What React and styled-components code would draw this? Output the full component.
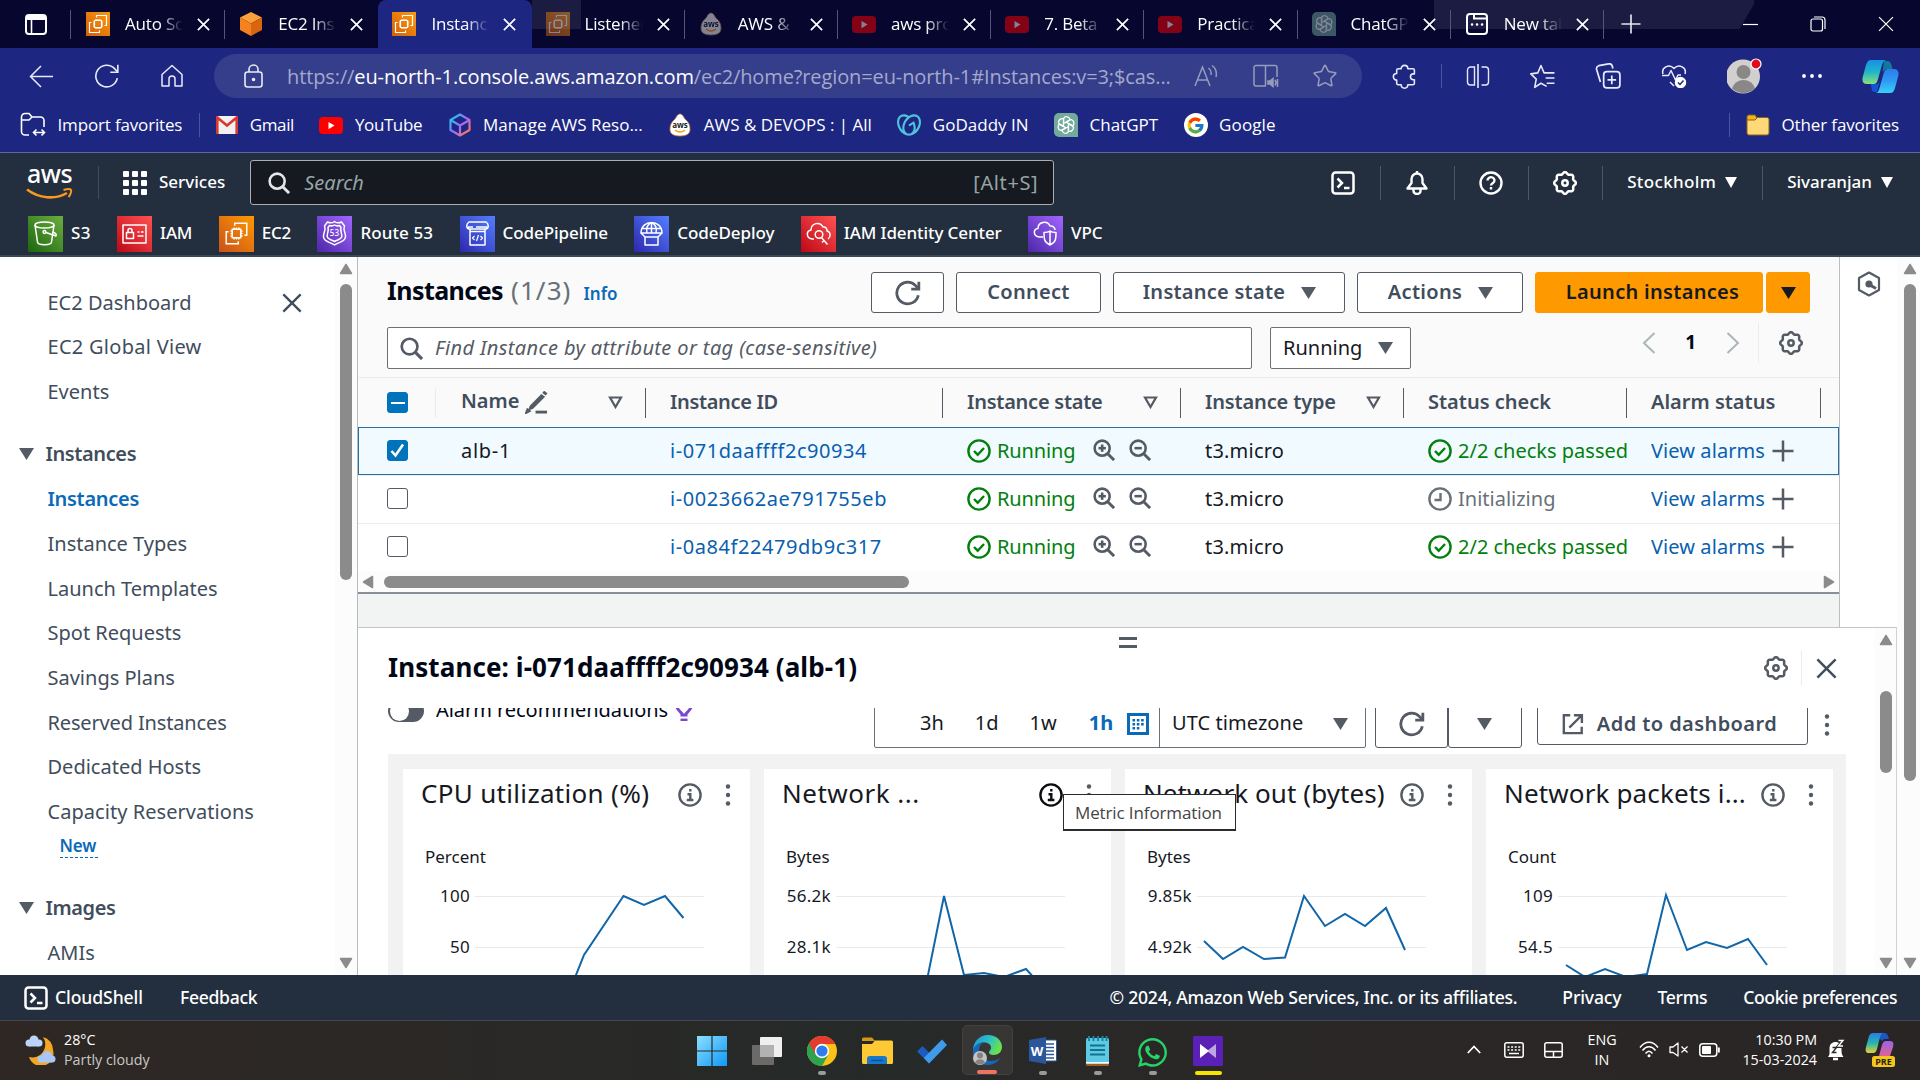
import React from "react";
import styled, { createGlobalStyle, css } from "styled-components";
import { FcGoogle } from "react-icons/fc";
import { FaWhatsapp } from "react-icons/fa";
import { SiGodaddy } from "react-icons/si";
import { Star } from "lucide-react";

const AWS_FONT = `"Noto Sans", "Open Sans", sans-serif`;
const OS_FONT = `"Open Sans", "Noto Sans", sans-serif`;

const GlobalStyle = createGlobalStyle`
  * { box-sizing: border-box; }
  body { margin: 0; background: #fff; overflow: hidden; }
  svg { display: block; flex: none; }
`;

const Screen = styled.div`
  width: 1920px;
  height: 1080px;
  display: flex;
  flex-direction: column;
  overflow: hidden;
  font-family: ${AWS_FONT};
  font-size: 20px;
  line-height: 1.3;
  color: #000716;
  white-space: nowrap;
`;

const Label = styled.span`
  font-size: ${(p) => p.$size || 20}px;
  font-weight: ${(p) => p.$weight || 400};
  letter-spacing: ${(p) => p.$ls || 0}px;
  color: ${(p) => p.$color || "inherit"};
  margin-left: ${(p) => p.$ml || 0}px;
`;

const Spacer = styled.div`
  flex: ${(p) => (p.$w ? `none` : 1)};
  width: ${(p) => p.$w || 0}px;
`;

/* ------------------------------- browser ------------------------------- */

const TabStrip = styled.div`
  height: 48px;
  flex: none;
  display: flex;
  align-items: stretch;
  background: #06062e;
  color: #fff;
  font-family: ${OS_FONT};
  background-image: linear-gradient(#1c1b41, #1c1b41),
    linear-gradient(120deg, #1c1b41 calc(100% - 13px), transparent calc(100% - 12px));
  background-size: 49px 29px, 320px 29px;
  background-position: 532px 0, 1434px 0;
  background-repeat: no-repeat;
`;

const TabActions = styled.div`
  width: 72px;
  display: flex;
  align-items: center;
  padding-left: 25px;
  gap: 23px;
`;

const VRule = styled.div`
  flex: none;
  width: 1px;
  height: ${(p) => p.$h}px;
  background: ${(p) => p.$color};
`;

const Tab = styled.div`
  width: 153.2px;
  display: flex;
  align-items: center;
  padding-left: 14px;
  border-radius: 8px 8px 0 0;
  ${(p) => p.$active && css`background: #1d2681;`}
  > svg { opacity: ${(p) => (p.$dim ? 0.5 : 1)}; }
  > svg:last-of-type { opacity: 1; }
`;

const TabTitle = styled.div`
  width: 58px;
  margin: 0 14px 0 15px;
  overflow: hidden;
  font-size: 17px;
  letter-spacing: -0.2px;
  -webkit-mask-image: linear-gradient(90deg, #000 60%, transparent);
  mask-image: linear-gradient(90deg, #000 60%, transparent);
`;

const WindowButtons = styled.div`
  margin-left: auto;
  display: flex;
  align-items: center;
  gap: 52px;
  padding-right: 26px;
`;

const Toolbar = styled.div`
  height: 56px;
  flex: none;
  display: flex;
  align-items: center;
  background: #1d2681;
  color: #e8eaf8;
  padding: 0 21px 0 29px;
  font-family: ${OS_FONT};
`;

const NavButtons = styled.div`
  display: flex;
  align-items: center;
  flex: none;
  width: 185px;
  gap: 40px;
`;

const AddressBar = styled.div`
  flex: none;
  width: 1148px;
  height: 44px;
  border-radius: 22px;
  background: #343e8b;
  display: flex;
  align-items: center;
  padding: 0 24px 0 30px;
`;

const Url = styled.div`
  margin-left: 24px;
  padding-top: 1px;
  width: 908px;
  font-size: 20px;
  letter-spacing: -0.11px;
  color: #a4a9cc;
  b { font-weight: 400; color: #fff; }
`;

const ToolbarActions = styled.div`
  flex: 1;
  display: flex;
  align-items: center;
  gap: 40px;
  padding-left: 30px;
`;

const ToolbarGroup = styled.div`
  display: flex;
  align-items: center;
  gap: 24px;
`;

const Bookmarks = styled.div`
  height: 49px;
  flex: none;
  display: flex;
  align-items: center;
  gap: 25.5px;
  background: #1d2681;
  border-bottom: 1px solid #5b67a8;
  color: #fff;
  padding: 0 21px 6px 20px;
  font-family: ${OS_FONT};
  font-size: 17px;
`;

const Bookmark = styled.div`
  display: flex;
  align-items: center;
  gap: 11.5px;
  letter-spacing: ${(p) => p.$ls || 0}px;
`;

const BookmarkRule = styled(VRule)`
  margin: 0 -9px;
`;

/* ------------------------------ aws header ----------------------------- */

const ConsoleHeader = styled.div`
  height: 104px;
  flex: none;
  background: #232f3e;
  border-bottom: 2px solid #3c4754;
  color: #fff;
`;

const HeaderRow = styled.div`
  height: 59px;
  display: flex;
  align-items: center;
  padding: 0 27px 0 26px;
`;

const AwsLogo = styled.div`
  width: 47px;
  height: 40px;
  display: flex;
  flex-direction: column;
  align-items: center;
  font-size: 25px;
  line-height: 21px;
  letter-spacing: -0.5px;
  font-weight: 500;
  svg { margin-top: 4px; }
`;

const ConsoleSearch = styled.div`
  width: 804px;
  height: 45px;
  margin-left: 25px;
  display: flex;
  align-items: center;
  gap: 14px;
  padding: 0 15px 0 17px;
  background: #16191f;
  border: 1px solid #a7b0b3;
  border-radius: 3px;
  color: #95a5a6;
  em { flex: 1; }
`;

const HeaderTools = styled.div`
  margin-left: auto;
  display: flex;
  align-items: center;
  gap: 24.5px;
`;

const MenuLabel = styled.div`
  display: flex;
  align-items: center;
  gap: 9px;
  font-size: 17px;
  font-weight: 500;
  letter-spacing: ${(p) => p.$ls || 0}px;
`;

const ServicesRow = styled.div`
  height: 43px;
  display: flex;
  align-items: center;
  gap: 26.4px;
  padding-left: 28px;
`;

const Service = styled.div`
  display: flex;
  align-items: center;
  gap: 8px;
  font-size: 17px;
  font-weight: 500;
  letter-spacing: ${(p) => p.$ls ?? -0.08}px;
`;

const ServiceTile = styled.div`
  width: 35px;
  height: 36px;
  display: grid;
  place-items: center;
  background: linear-gradient(45deg, ${(p) => p.$from}, ${(p) => p.$to});
`;

/* -------------------------------- body --------------------------------- */

const Body = styled.div`
  height: 718px;
  flex: none;
  display: flex;
  background: #fff;
`;

const Sidebar = styled.nav`
  width: 335px;
  padding-top: 23.5px;
  color: #414d5c;
  overflow: hidden;
`;

const NavItem = styled.div`
  height: 44.65px;
  display: flex;
  align-items: center;
  justify-content: space-between;
  padding: 0 33px 0 47.500px;
  ${(p) => p.$active && css`color: #0a6ab8; font-weight: 600; letter-spacing: -0.3px;`}
`;

const NavGroup = styled.div`
  display: flex;
  align-items: center;
  gap: 12px;
  height: ${(p) => p.$h}px;
  padding: ${(p) => p.$pt}px 0 0 18.500px;
  font-weight: 600;
  letter-spacing: -0.4px;
  color: #414d5c;
`;

const NewBadge = styled.div`
  width: 38px;
  height: 25px;
  margin: -1px 0 0 59.500px;
  line-height: 25px;
  border-bottom: 1.500px dashed #0a6ab8;
  color: #0a6ab8;
  font-size: 17px;
  font-weight: 600;
  letter-spacing: -0.2px;
`;

const Gutter = styled.div`
  width: ${(p) => p.$w}px;
  flex: none;
  display: flex;
  flex-direction: column;
  align-items: center;
  padding: ${(p) => p.$pt}px 0 5px ${(p) => p.$pl || 0}px;
  background: #fcfcfc;
`;

const ThumbV = styled.div`
  width: 12px;
  height: ${(p) => p.$h}px;
  margin: ${(p) => p.$mt}px 0 auto;
  border-radius: 6px;
  background: #8b8b8b;
`;

const Center = styled.div`
  width: 1540px;
  flex: none;
  display: flex;
  flex-direction: column;
  border-left: 1px solid #b6bbc0;
`;

const Upper = styled.div`
  height: 370px;
  flex: none;
  display: flex;
`;

const TablePanel = styled.section`
  width: 1482px;
  display: flex;
  flex-direction: column;
  background: #f2f3f3;
  border-right: 1px solid #b9bec4;
`;

const Rail = styled.div`
  flex: 1;
  padding: 14px 0 0 17px;
  background: #fff;
`;

const PanelHeader = styled.div`
  height: 121px;
  flex: none;
  background: #fafafa;
  border-bottom: 1px solid #e9ebed;
  padding: 15px 29px 0 29px;
`;

const HeaderLine = styled.div`
  display: flex;
  align-items: center;
  height: 41px;
  gap: 12px;
`;

const Heading = styled.h2`
  margin: 0 0 ${(p) => p.$mb ?? 4}px;
  font-size: ${(p) => p.$size || 25}px;
  font-weight: 700;
  letter-spacing: ${(p) => p.$ls || 0}px;
  line-height: 1.2;
`;

const InfoLink = styled.a`
  margin: 4px 0 0 0;
  font-size: 17px;
  font-weight: 600;
  color: #0a6ab8;
`;

const Button = styled.button`
  width: ${(p) => p.$w}px;
  height: ${(p) => p.$h || 41}px;
  flex: none;
  margin: ${(p) => p.$mt || 0}px 0 0;
  padding: 0 ${(p) => p.$pr || 0}px 2px ${(p) => p.$pl || 0}px;
  display: flex;
  align-items: center;
  justify-content: center;
  gap: ${(p) => p.$gap || 16}px;
  font: 600 20px ${AWS_FONT};
  letter-spacing: ${(p) => p.$ls || 0.3}px;
  color: #414d5c;
  background: #fff;
  border: 1px solid #545b64;
  border-radius: 3px;
  svg { margin-top: 2px; }
  ${(p) => p.$primary && css`background: #ff9900; border-color: #ff9900; color: #16191f;`}
`;

const SplitButton = styled.div`
  display: flex;
  gap: 3px;
`;

const FilterLine = styled.div`
  display: flex;
  align-items: flex-start;
  margin-top: 14px;
`;

const FilterInput = styled.div`
  width: 865px;
  height: 42px;
  display: flex;
  align-items: center;
  gap: 12px;
  padding-left: 12px;
  background: #fff;
  border: 1px solid #687078;
  border-radius: 2px;
  color: #545b64;
  letter-spacing: 0.38px;
`;

const Select = styled.div`
  width: 141px;
  height: 42px;
  margin-left: 18px;
  display: flex;
  align-items: center;
  justify-content: space-between;
  padding: 0 17px 0 12px;
  background: #fff;
  border: 1px solid #687078;
  border-radius: 2px;
  color: #16191f;
`;

const Pager = styled.div`
  margin-left: auto;
  margin-top: -5px;
  height: 42px;
  display: flex;
  align-items: center;
  padding-right: 7px;
  span { margin-top: -2px; }
`;

const columns = "78px 210px 297px 238px 223px 223px 194px 19px";

const TableHead = styled.div`
  height: 49px;
  flex: none;
  display: grid;
  grid-template-columns: ${columns};
  align-items: center;
  background: #fafafa;
  color: #414d5c;
  font-weight: 600;
`;

const HeadCell = styled.div`
  display: flex;
  align-items: center;
  padding-left: ${(p) => (p.$first ? 29 : p.$name ? 25 : 24)}px;
  letter-spacing: ${(p) => p.$ls || 0}px;
  ${VRule} { margin-left: auto; }
`;

const HeadText = styled.span`
  margin-top: ${(p) => p.$up || -2}px;
`;

const SortMark = styled.div`
  margin-left: auto;
  margin-right: 22px;
  & + ${VRule} { margin-left: 0; }
`;

const TableRow = styled.div`
  height: 48px;
  flex: none;
  display: grid;
  grid-template-columns: ${columns};
  align-items: start;
  background: #fff;
  border-top: 1px solid #eaeded;
  ${(p) => p.$selected && css`
    background: #f1faff;
    outline: 1px solid #2a6f9f;
    outline-offset: -1px;
    border-top-color: #2a6f9f;
  `}
`;

const Cell = styled.div`
  display: flex;
  align-items: center;
  overflow: hidden;
  height: 45px;
  gap: ${(p) => p.$gap ?? 6}px;
  margin-left: ${(p) => (p.$first ? 29 : p.$name ? 25 : 24)}px;
  color: ${(p) => p.$color || "#16191f"};
  letter-spacing: ${(p) => p.$ls || 0}px;
`;

const ZoomPair = styled.div`
  display: flex;
  gap: 14px;
  margin: -2px 0 0 12px;
`;

const CheckSquare = styled.div`
  width: 21px;
  height: 21px;
  display: grid;
  place-items: center;
  border-radius: 3px;
  border: 1.5px solid ${(p) => (p.$on ? "#0073bb" : "#545b64")};
  background: ${(p) => (p.$on ? "#0073bb" : "#fff")};
`;

const HScroll = styled.div`
  height: 23px;
  flex: none;
  display: flex;
  align-items: center;
  padding: 0 3px 0 3px;
  background: #fcfcfc;
  border-bottom: 2px solid #879096;
`;

const ThumbH = styled.div`
  width: 525px;
  height: 12px;
  margin: 0 auto 0 9px;
  border-radius: 6px;
  background: #8b8b8b;
`;

/* ----------------------------- split panel ----------------------------- */

const SplitPanel = styled.section`
  flex: 1;
  display: flex;
  background: #fff;
  border-top: 1px solid #c3c6c8;
  border-right: 1px solid #d0d3d6;
  overflow: hidden;
`;

const SplitMain = styled.div`
  flex: 1;
  min-width: 0;
  display: flex;
  flex-direction: column;
`;

const DragHandle = styled.div`
  width: 18px;
  height: 11px;
  margin: 9px 0 0 761px;
  border: solid #545b64;
  border-width: 3px 0;
`;

const SplitHeader = styled.div`
  height: 60px;
  display: flex;
  align-items: center;
  padding: 0 37px 20px 30px;
`;

const SplitBody = styled.div`
  flex: 1;
  overflow: hidden;
  padding-left: 30px;
`;

const MetricsToolbar = styled.div`
  height: 54px;
  margin-top: -8px;
  display: flex;
  align-items: flex-start;
`;

const ToggleLine = styled.div`
  width: 486px;
  height: 20px;
  display: flex;
  align-items: center;
`;

const Toggle = styled.div`
  width: 36px;
  height: 22px;
  margin-top: 2px;
  display: flex;
  align-items: center;
  padding-left: 2px;
  border-radius: 11px;
  background: #545b64;
  &::before {
    content: "";
    width: 19px;
    height: 19px;
    border-radius: 50%;
    background: #fff;
  }
`;

const RangeBox = styled.div`
  width: 492px;
  height: 48px;
  display: flex;
  align-items: center;
  border: 1px solid #687078;
  border-radius: 2px;
  color: #16191f;
`;

const RangePart = styled.div`
  width: 285px;
  height: 46px;
  display: flex;
  align-items: center;
  padding: 0 0 2px 45px;
  border-right: 1px solid #687078;
  svg { margin: 2px 0 0 14px; }
`;

const ZonePart = styled.div`
  flex: 1;
  display: flex;
  align-items: center;
  justify-content: space-between;
  padding: 0 17px 2px 12px;
  letter-spacing: 0.07px;
  svg { margin-top: 2px; }
`;

const ButtonPair = styled.div`
  display: flex;
  margin-left: 9px;
`;

const ToolbarMenu = styled.div`
  margin: 13px 0 0 16px;
`;

const Charts = styled.div`
  width: 1458px;
  height: 221px;
  display: flex;
  gap: 14px;
  padding: 15px 13px 0 15px;
  background: #f2f2f2;
`;

const ChartCard = styled.div`
  flex: 1;
  background: #fff;
  overflow: hidden;
`;

const ChartHead = styled.div`
  height: 50px;
  display: flex;
  align-items: center;
  padding: 1px 19px 0 18px;
`;

const ChartTitle = styled.div`
  flex: 1;
  margin-top: -1px;
  font-size: 26px;
  letter-spacing: ${(p) => p.$ls}px;
  color: #16191f;
`;

const ChartUnit = styled.div`
  margin: 27px 0 0 22px;
  height: 23px;
  font-size: 17px;
  color: #16191f;
`;

const ChartBody = styled.div`
  display: flex;
  gap: 5px;
  > svg { margin-top: 11px; }
`;

const Ticks = styled.div`
  width: 67px;
  display: flex;
  flex-direction: column;
  align-items: flex-end;
  font-size: 17px;
  letter-spacing: 0.3px;
  color: #16191f;
  padding-top: 16px;
  gap: 29px;
  line-height: 22px;
`;

const Tooltip = styled.div`
  position: absolute;
  left: 1063px;
  top: 794px;
  width: 173px;
  height: 37px;
  display: flex;
  align-items: center;
  padding-left: 11px;
  background: #fff;
  border: 1px solid #2b2b2b;
  border-bottom-width: 2px;
  font: 17px ${OS_FONT};
  letter-spacing: -0.12px;
  color: #444;
`;

/* --------------------------- footer & taskbar -------------------------- */

const Footer = styled.footer`
  height: 45px;
  flex: none;
  display: flex;
  align-items: center;
  background: #232f3e;
  color: #fff;
  padding: 0 23px 0 24px;
  font-size: 17.6px;
  font-weight: 500;
`;

const Taskbar = styled.div`
  height: 60px;
  flex: none;
  display: flex;
  align-items: center;
  background: linear-gradient(90deg, #2e2724, #2a2826 25%, #252a28 45%, #2a2827 60%, #292524);
  border-top: 1px solid #43474b;
  color: #fff;
  font-family: ${OS_FONT};
  font-size: 14.3px;
  line-height: 20px;
  padding-bottom: 2px;
`;

const Weather = styled.div`
  width: 684px;
  display: flex;
  align-items: center;
  gap: 8px;
  padding-left: 25px;
  small { font-size: inherit; color: #c9c7c6; }
`;

const TaskButton = styled.div`
  width: 55.2px;
  height: 60px;
  display: flex;
  flex-direction: column;
  align-items: center;
  justify-content: flex-end;
  padding-bottom: 5px;
  gap: 5px;
`;

const TaskIcon = styled.div`
  width: 50px;
  height: 30px;
  display: grid;
  place-items: center;
`;

const ActiveTaskButton = styled(TaskButton)`
  width: 51px;
  height: 50px;
  margin: 0 2px;
  padding-bottom: 0;
  border-radius: 5px;
  background: #383635;
  border: 1px solid #444140;
`;

const Pill = styled.div`
  width: ${(p) => p.$w || 0}px;
  height: 4px;
  border-radius: 2px;
  background: ${(p) => p.$color || "#9b9a99"};
`;

const Tray = styled.div`
  margin-left: auto;
  display: flex;
  align-items: center;
  padding-right: 25px;
`;

const TrayText = styled.div`
  width: ${(p) => p.$w}px;
  margin: 0 ${(p) => p.$mr}px 0 ${(p) => p.$ml}px;
  text-align: ${(p) => p.$align};
`;

/* -------------------------------- icons -------------------------------- */

const Svg = ({ w = 24, h, box = "0 0 24 24", sw = 2, color = "currentColor", children, ...rest }) => (
  <svg width={w} height={h || w} viewBox={box} fill="none" stroke={color} strokeWidth={sw} {...rest}>
    {children}
  </svg>
);

const Caret = ({ w = 15, h = 11, color = "#545b64" }) => (
  <svg width={w} height={h} viewBox="0 0 15 11" preserveAspectRatio="none"><path d="M0 0H15L7.5 11Z" fill={color} /></svg>
);

const ScrollArrow = ({ dir = "up" }) => {
  const turn = { up: 0, right: 90, down: 180, left: 270 }[dir];
  return (
    <svg width="14" height="14" viewBox="0 0 14 14">
      <path d="M7 2.500 12.500 11.500H1.500Z" fill="#8b8b8b" stroke="#8b8b8b" strokeWidth="1.500" strokeLinejoin="round" transform={`rotate(${turn} 7 7)`} />
    </svg>
  );
};

const Cross = ({ w = 12, sw = 1.6, color = "#fff" }) => (
  <Svg w={w} box="0 0 12 12" sw={sw} color={color}><path d="M.8.8 11.2 11.2M11.2.8.8 11.2" /></Svg>
);

const Ec2 = () => (
  <g fill="none" stroke="#fff" strokeWidth="1.2">
    <path d="M8.500 8.500h7v7h-7zM10 8.500V7M12 8.500V7M14 8.500V7M10 17v-1.500M12 17v-1.500M14 17v-1.500M7 10h1.500M7 12h1.500M7 14h1.500M15.500 10H17M15.500 12H17M15.500 14H17" />
    <path d="M10.500 5.500V3.500H20.500V13.500H18.500M5.500 10.500H3.500V20.500H13.500V18.500" />
  </g>
);

const Ec2Fav = () => (
  <svg width="24" height="24" viewBox="0 0 24 24">
    <defs><linearGradient id="ec2f" x1="0" y1="1" x2="1" y2="0"><stop stopColor="#d45f07" /><stop offset="1" stopColor="#fb9a11" /></linearGradient></defs>
    <rect width="24" height="24" fill="url(#ec2f)" /><Ec2 />
  </svg>
);

const CubeFav = () => (
  <svg width="24" height="24" viewBox="0 0 24 24">
    <path d="M12 0 23 5.500 12 11.500 1 5.500Z" fill="#fba13b" /><path d="M1 5.500 12 11.500V24L1 18Z" fill="#f58220" /><path d="M23 5.500 12 11.500V24L23 18Z" fill="#d9660f" />
  </svg>
);

const AwsFav = () => (
  <svg width="24" height="24" viewBox="0 0 24 24">
    <path d="M12 1c3 0 3.500 4 6 6 3 2.500 4 6 4 9s-1 7-10 7S2 19 2 16s1-6.500 4-9c2.500-2 3-6 6-6Z" fill="#fff" stroke="#c9854a" strokeWidth=".8" />
    <text x="12" y="14.500" textAnchor="middle" fontSize="8" fontWeight="700" fontFamily={OS_FONT} fill="#222">aws</text>
    <path d="M7 17c3 2.500 7 2.500 10 0" fill="none" stroke="#f90" strokeWidth="1.500" />
  </svg>
);

const YouTube = ({ w = 24 }) => (
  <svg width={w} height={(w * 17) / 24} viewBox="0 0 24 17"><rect width="24" height="17" rx="4" fill="#f00" /><path d="M9.500 5v7.200l6-3.600Z" fill="#fff" /></svg>
);

const ChatGpt = () => (
  <svg width="24" height="24" viewBox="0 0 24 24">
    <path d="M5 0H19A5 5 0 0 1 24 5V24H5A5 5 0 0 1 0 19V5A5 5 0 0 1 5 0Z" fill="#74aa9c" />
    <g fill="none" stroke="#fff" strokeWidth="1.300">
      {[0, 60, 120, 180, 240, 300].map((a) => (
        <path key={a} transform={`rotate(${a} 12 12)`} d="M12 9.200 16 6.900A3.600 3.600 0 0 0 10.300 4.400 3.400 3.400 0 0 0 9.500 6.800V13.400" />
      ))}
    </g>
  </svg>
);

const NewTabFav = () => (
  <Svg sw={2}><rect x="2" y="2" width="20" height="20" rx="3" /><path d="M9 2v4.500h13" /><path d="M7 12.500h.1M12 12.500h.1M17 12.500h.1" strokeLinecap="round" strokeWidth="2.500" /></Svg>
);

const TabMenu = () => (
  <Svg w={22} h={21} box="0 0 22 21" color="#fff"><rect x="1" y="1" width="20" height="19" rx="3" /><path d="M1 4h20" strokeWidth="4" /><path d="M6.500 5v15" strokeWidth="1.600" /></Svg>
);

const Gmail = () => (
  <svg width="22" height="18" viewBox="0 0 22 18"><rect width="22" height="18" rx="2" fill="#f1f1f1" /><path d="M1.300 18V1.500L11 9.500 20.700 1.500V18" fill="none" stroke="#d93a30" strokeWidth="2.600" /></svg>
);

const ManageAws = () => (
  <svg width="24" height="24" viewBox="0 0 24 24">
    <defs><linearGradient id="mng" x1="0" y1="0" x2="1" y2="1"><stop offset=".1" stopColor="#22c3ee" /><stop offset=".5" stopColor="#9a6bff" /><stop offset=".95" stopColor="#ff7b54" /></linearGradient></defs>
    <path d="M12 1.500 21.500 7V17L12 22.500 2.500 17V7ZM2.500 7 12 12.500 21.500 7M12 12.500V22.500" fill="none" stroke="url(#mng)" strokeWidth="2.200" strokeLinejoin="round" />
  </svg>
);

const GoogleFav = styled.div`
  width: 24px;
  height: 24px;
  display: grid;
  place-items: center;
  border-radius: 50%;
  background: #fff;
`;

const ImportFolder = () => (
  <Svg w={26} box="0 0 26 26" sw={1.600}><path d="M9 23H5a3.500 3.500 0 0 1-3.500-3.500V5A3.500 3.500 0 0 1 5 1.500h4L12 5h8.500A3.500 3.500 0 0 1 24 8.500V15M1.500 8H9l3-3" /><path d="M13.500 20.500h11M16.500 17.500l-3 3 3 3M21.500 17.500l3 3-3 3" /></Svg>
);

const Folder = () => (
  <svg width="24" height="22" viewBox="0 0 24 22"><path d="M1 3a2 2 0 0 1 2-2h6l2 3-2 3H1Z" fill="#f2b41f" stroke="#8a6414" /><path d="M1 6h8l2.500-2.500H21a2 2 0 0 1 2 2V19a2 2 0 0 1-2 2H3a2 2 0 0 1-2-2Z" fill="#ffd978" stroke="#8a6414" /></svg>
);

const Copilot = ({ w = 37, h = 33 }) => (
  <svg width={w} height={h} viewBox="0 0 37 33">
    <defs>
      <linearGradient id="cpa" x1="0" y1="0" x2="0" y2="1"><stop stopColor="#1890e6" /><stop offset=".5" stopColor="#1fb6c9" /><stop offset="1" stopColor="#8be07a" /></linearGradient>
      <linearGradient id="cpb" x1="0" y1="0" x2="0" y2="1"><stop stopColor="#2b7de9" /><stop offset=".5" stopColor="#2f9bf5" /><stop offset="1" stopColor="#38d0f5" /></linearGradient>
    </defs>
    <path d="M22 1h3c3 0 4 2 4.500 4l1 4h-7l-3 3Z" fill="#117a9b" />
    <path d="M15 32h-2c-3 0-3-2-3.500-4l-.800-4h7l2-3Z" fill="#1553d6" />
    <path d="M9 0H25c-3 0-4 2-5 5l-4 14c-1 4-2 5-5 5H5c-4 0-5.500-3-4-8L4 5C5 2 6 0 9 0Z" fill="url(#cpa)" />
    <path d="M28 33H13c3 0 3.500-2 4.500-5l4-14c1-4 2-5 5-5H32c4 0 5.500 3 4 8l-3 11c-1 3-2 5-5 5Z" fill="url(#cpb)" />
  </svg>
);

const CopilotPre = () => (
  <svg width="30" height="36" viewBox="0 0 30 36">
    <defs>
      <linearGradient id="cqa" x1="0" y1="0" x2="0" y2="1"><stop stopColor="#2a7be8" /><stop offset=".5" stopColor="#23b5b0" /><stop offset="1" stopColor="#e6d23c" /></linearGradient>
      <linearGradient id="cqb" x1="0" y1="0" x2="0" y2="1"><stop stopColor="#9a63e8" /><stop offset="1" stopColor="#f2607e" /></linearGradient>
    </defs>
    <path d="M9 1H20c2 0 3 2 4 6h-5l-2 2Z" fill="#1b56c4" />
    <path d="M8 1h11c-2 0-3 1-4 4l-3 12c-1 3-2 4-4 4H4c-3 0-4-2-3-6L4 4C5 2 6 1 8 1Z" fill="url(#cqa)" />
    <path d="M20 28H10c2 0 3-1 4-4l3-11c1-3 2-4 4-4h4c3 0 4 2 3 6l-3 9c-1 3-3 4-5 4Z" fill="url(#cqb)" />
    <rect x="7" y="24" width="23" height="11" rx="2.500" fill="#f5c518" />
    <text x="18.500" y="33" textAnchor="middle" fontSize="9" fontWeight="700" fontFamily={OS_FONT} fill="#222">PRE</text>
  </svg>
);

const gearPath = Array.from({ length: 97 }, (_, i) => {
  const t = (i / 96) * Math.PI * 2;
  const r = 9.9 + 0.95 * Math.cos(8 * t);
  return `${i ? "L" : "M"}${(12 + r * Math.cos(t)).toFixed(2)} ${(12 + r * Math.sin(t)).toFixed(2)}`;
}).join("") + "Z";

const Gear = ({ color = "#545b64", sw = 2.5, w = 24 }) => (
  <Svg w={w} color={color} sw={sw}><path d={gearPath} /><circle cx="12" cy="12" r="2.700" /></Svg>
);

const Refresh = ({ w = 26, sw = 2.6, color = "#545b64" }) => (
  <Svg w={w} color={color} sw={sw}><path d="M21.500 14A10 10 0 1 1 19 5.200L21.500 8" /><path d="M22 1.500V8.500H15" /></Svg>
);

const Magnifier = ({ w = 22, color = "#545b64", sign }) => (
  <Svg w={w} color={color} sw={2.800}><circle cx="10" cy="10" r="8.200" /><path d="M15.800 15.800 23 23" strokeWidth="3.200" />{sign && <path d="M6 10h8" />}{sign === "+" && <path d="M10 6v8" />}</Svg>
);

const CloudShellIcon = ({ w = 24 }) => (
  <Svg w={w} color="#fff" sw={2.500}><rect x="1.500" y="1.500" width="21" height="21" rx="3" /><path d="M6.500 7.500 11 12 6.500 16.500M13 17h5.500" /></Svg>
);

const StatusOk = () => (
  <Svg w={24} color="#037f0c" sw={2.400}><circle cx="12" cy="12" r="10.600" /><path d="M7 12l3.700 3.700L17 9" /></Svg>
);

const StatusPending = () => (
  <Svg w={24} color="#687078" sw={2.400}><circle cx="12" cy="12" r="10.600" /><path d="M12.500 6v7H6.500" /></Svg>
);

const PlusIcon = ({ color = "#545b64", w = 22, sw = 2.500 }) => (
  <Svg w={w} box="0 0 22 22" color={color} sw={sw}><path d="M11 .5v21M.5 11h21" /></Svg>
);

const InfoIcon = ({ color = "#545b64" }) => (
  <Svg w={24} color={color} sw={2.400}><circle cx="12" cy="12" r="10.600" /><path d="M12.300 6v2.600M9.500 11.200h2.800v5.300M8.800 17h6.600" /></Svg>
);

const Dots = () => (
  <svg width="6" height="24" viewBox="0 0 6 24" fill="#545b64"><circle cx="3" cy="3.500" r="2.200" /><circle cx="3" cy="12" r="2.200" /><circle cx="3" cy="20.500" r="2.200" /></svg>
);

const SortTriangle = () => (
  <Svg w={15} h={13} box="0 0 15 13" color="#545b64" sw={2.200}><path d="M2 1.500H13L7.500 11Z" /></Svg>
);

const AWS_ICON = { fill: "none", stroke: "#fff", strokeWidth: 1.5, strokeLinejoin: "round" };
const ServiceGlyph = ({ children }) => <svg width="27" height="27" viewBox="0 0 27 27" {...AWS_ICON}>{children}</svg>;

const services = [
  { name: "S3", from: "#1b660f", to: "#6cae3e", ls: 0.3, icon: <ServiceGlyph><ellipse cx="12.500" cy="5" rx="9.500" ry="3" /><path d="M3 5l2.500 17c0 3.500 14 3.500 14 0L22 5" /><circle cx="12.500" cy="12" r="1.400" /><path d="M14 12.500 24 16c1-2-1-3-3-4" /></ServiceGlyph> },
  { name: "IAM", from: "#bd0816", to: "#ff5252", ls: -0.2, icon: <ServiceGlyph><rect x="2" y="5" width="23" height="18" /><rect x="5.500" y="12.500" width="7" height="6" /><path d="M7 12.500v-2a2 2 0 0 1 4 0v2M16.500 12h2M20 12h2.500M16.500 16h6" /></ServiceGlyph> },
  { name: "EC2", from: "#c8511b", to: "#ff9900", ls: -0.2, icon: <svg width="29" height="29" viewBox="0 0 24 24"><Ec2 /></svg> },
  { name: "Route 53", from: "#4d27a8", to: "#a166ff", ls: 0.1, icon: <ServiceGlyph><path d="M13.500 1.500c2 1.500 5 1.500 7 .500l3 4c-2 4 1.500 7 1 11-.500 5-7 5-11 8-4-3-10.500-3-11-8-.500-4 3-7 1-11l3-4c2 1 5 1 7-.500Z" /><path d="M13.500 5c1.500 1 3.500 1 5 .500l1.500 2c-1 3 1 6 .800 9-.500 3-4 3-7.300 5-3.300-2-6.800-2-7.300-5-.200-3 1.800-6 .800-9l1.500-2c1.500.500 3.500.500 5-.500Z" /><text x="13.500" y="16" textAnchor="middle" fontSize="8" fontFamily={AWS_FONT} fill="#fff" stroke="none">53</text></ServiceGlyph> },
  { name: "CodePipeline", from: "#2e27ad", to: "#527fff", icon: <ServiceGlyph><path d="M5 2h17c3 2 3 6 0 7H5C2 8 2 4 5 2ZM4 7h5M12 7h11M6 9v2.500h15V9M6 11.500V25h15V11.500" /><path d="M10.500 16 8.500 18l2 2M16.500 16l2 2-2 2M14.500 15l-2 6" strokeWidth="1.200" /></ServiceGlyph> },
  { name: "CodeDeploy", from: "#2e27ad", to: "#527fff", icon: <ServiceGlyph><path d="M3 13C3 -1 24 -1 24 13ZM13.500 2.500v10.500M9 13c-1-5 1-9 4.500-10.500C17 4 19 8 18 13M4 8.500h19" /><path d="M3 13l4 4h13l4-4M7 17v8h13v-8Z" /></ServiceGlyph> },
  { name: "IAM Identity Center", from: "#bd0816", to: "#ff5252", ls: -0.1, icon: <ServiceGlyph><path d="M9 19H7c-6-1-6-8-1-9 0-7 9-9 12-3 3-.500 4 2 4 4 4 1 4 6 1 8" /><circle cx="14" cy="14.500" r="3.800" /><path d="M16.500 17.500l6 7M19 20.500l-2 2" /></ServiceGlyph> },
  { name: "VPC", from: "#4d27a8", to: "#a166ff", icon: <ServiceGlyph><path d="M11 17H7C1 16 1 9 6 8.500 6 2 15 0 18 6c3-.500 5 2 5 4" /><path d="M18 11c2 1.500 4 1.500 6 1.500 0 6 0 10-6 12.500-6-2.500-6-6.500-6-12.500 2 0 4 0 6-1.500ZM18 11v14" /></ServiceGlyph> },
];

const tabs = [
  { t: "Auto Sca", i: <Ec2Fav />, rule: true },
  { t: "EC2 Ins", i: <CubeFav /> },
  { t: "Instanc", i: <Ec2Fav />, active: true },
  { t: "Listener", i: <Ec2Fav />, rule: true, dim: true },
  { t: "AWS & ", i: <AwsFav />, rule: true, dim: true },
  { t: "aws proj", i: <YouTube />, rule: true, dim: true },
  { t: "7. Beta", i: <YouTube />, rule: true, dim: true },
  { t: "Practical", i: <YouTube />, rule: true, dim: true },
  { t: "ChatGPT", i: <ChatGpt />, rule: true, dim: true },
  { t: "New tab", i: <NewTabFav />, rule: true },
];

const rows = [
  { name: "alb-1", id: "i-071daaffff2c90934", ok: true, selected: true },
  { name: "", id: "i-0023662ae791755eb", ok: false },
  { name: "", id: "i-0a84f22479db9c317", ok: true },
];

const charts = [
  { title: "CPU utilization (%)", ls: 0.32, unit: "Percent", ticks: ["100", "50"], line: "M99 100 109 75 148.500 16 169 25 190 16 208.500 38" },
  { title: "Network ...", ls: 0.5, unit: "Bytes", ticks: ["56.2k", "28.1k"], line: "M91 100 108 16 128 95 148 93 168 97 190 89 200 100", active: true },
  { title: "Network out (bytes)", ls: 0.08, unit: "Bytes", ticks: ["9.85k", "4.92k"], line: "M7 61 26 79 46 67 67 79 88 77.500 107 16 128 46 148 34 168 46 189 28 208 70" },
  { title: "Network packets i...", ls: 0.14, unit: "Count", ticks: ["109", "54.5"], line: "M8 85 27 97 47 89 68 97 89 94 108 15 129 70 148 62 169 68 190 59 209 85" },
];

/* --------------------------------- app --------------------------------- */

export default function App() {
  return (
    <Screen>
      <GlobalStyle />

      <TabStrip>
        <TabActions><TabMenu /><VRule $h={29} $color="#55557a" /></TabActions>
        {tabs.map((tab) => (
          <Tab key={tab.t} $active={tab.active} $dim={tab.dim}>
            {tab.i}
            <TabTitle>{tab.t}</TabTitle>
            <Cross w={13} />
            <Spacer />
            {tab.rule && <VRule $h={29} $color="#55557a" />}
          </Tab>
        ))}
        <Spacer $w={17} />
        <Bookmark><PlusIcon w={20} color="#e6e6f0" sw={1.800} /></Bookmark>
        <WindowButtons>
          <Svg w={15} box="0 0 15 15" color="#fff" sw={1.200}><path d="M0 7.500h15" /></Svg>
          <Svg w={16} box="0 0 16 16" color="#fff" sw={1.200}><rect x="1" y="3" width="11.500" height="12" rx="2" /><path d="M4 1h8a3 3 0 0 1 3 3v9" /></Svg>
          <Cross w={16} sw={0.900} />
        </WindowButtons>
      </TabStrip>

      <Toolbar>
        <NavButtons>
          <Svg w={25} box="0 0 25 25" sw={1.500}><path d="M24 12.500H1.500M12 2 1.500 12.500 12 23" /></Svg>
          <Refresh w={26} sw={1.500} color="#e8eaf8" />
          <Svg w={24} sw={1.500}><path d="M2 10.500 12 1.500 22 10.500V22H15V15a3 3 0 0 0-6 0v7H2Z" strokeLinejoin="round" /></Svg>
        </NavButtons>
        <AddressBar>
          <Svg w={19} h={24} box="0 0 19 24" sw={1.600}><rect x="1" y="8" width="17" height="15" rx="2.500" /><path d="M5 8V5.500a4.500 4.500 0 0 1 9 0V8" /><circle cx="9.500" cy="15.500" r="1" fill="currentColor" /></Svg>
          <Url>https://<b>eu-north-1.console.aws.amazon.com</b>/ec2/home?region=eu-north-1#Instances:v=3;$cas...</Url>
          <Svg w={24} color="#989cbb" sw={1.500}><path d="M1 22 8.500 3 16 22M3.500 16h10M14.500 4c2 1.500 3 4 2.500 7M18 1.500c3.500 2.500 5 7 4 11.500" /></Svg>
          <Spacer $w={35} />
          <Svg w={26} box="0 0 26 24" h={24} color="#989cbb" sw={1.500}><path d="M13 22H3a2 2 0 0 1-2-2V3.500A2 2 0 0 1 3 1.500h10M12.500 1.500v20M12.500 1.500H22a2 2 0 0 1 2 2V13" /><path d="M15 17h2l3-2.500v8L17 20h-2Z" fill="#989cbb" /><path d="M22 16c1 1.500 1 4 0 5.500M24.500 15v8" /></Svg>
          <Spacer $w={33} />
          <Star size={26} color="#989cbb" strokeWidth={1.400} />
        </AddressBar>
        <ToolbarActions>
          <ToolbarGroup>
            <Svg w={25} sw={1.500}><path d="M6 4.500h2.800a3.200 3.200 0 0 1 6.400 0H20a1.500 1.500 0 0 1 1.500 1.500v3.500h-1a2.800 2.800 0 0 0 0 5.600h1V18.500A1.500 1.500 0 0 1 20 20h-4.800a3.200 3.200 0 0 1-6.400 0H6a1.500 1.500 0 0 1-1.500-1.500V15.500a3.200 3.200 0 0 1 0-6.400V6A1.500 1.500 0 0 1 6 4.500Z" strokeLinejoin="round" /></Svg>
            <VRule $h={24} $color="#4b54a0" />
            <Svg w={24} sw={1.600}><path d="M8.500 3H4.500A3 3 0 0 0 1.500 6V18a3 3 0 0 0 3 3H8.500ZM15.500 3h4a3 3 0 0 1 3 3V18a3 3 0 0 1-3 3h-4" strokeWidth="1.400" /><path d="M12 0v24" /></Svg>
          </ToolbarGroup>
          <Svg w={25} sw={1.500}><path d="M16 21.500 10.500 18.500 4.500 22.500 6 14.500.800 9.500 7.500 8.500 10.500 1.500 13.500 8.500H23.500M15 13.500h8.500M16 18.500h7.500" strokeLinejoin="round" /></Svg>
          <Svg w={26} sw={1.600}><rect x="8" y="8" width="15" height="15" rx="3" /><path d="M15.500 11.500v8M11.500 15.500h8M5 17.500 1.500 6a3 3 0 0 1 2-3.500L12.500.800A3 3 0 0 1 16 3l.500 2" /></Svg>
          <Svg w={26} box="0 0 26 24" h={24} sw={1.500}><path d="M13 22 9 18M2 10C0 4 8-1 13 4.500 18-1 26 4 24 10M1 11.500h6.500l2.500-5 4.500 9.500 2.500-5h3" strokeLinejoin="round" /><circle cx="19.500" cy="18.500" r="5" fill="#fff" stroke="#fff" /><path d="M17 18.500l2 2 3.500-4" stroke="#1d2681" /></Svg>
          <svg width="35" height="36" viewBox="0 0 35 36"><circle cx="16" cy="18.500" r="17" fill="#d2d0ce" /><circle cx="16.500" cy="14" r="7" fill="#8a8886" /><path d="M5 30.500a12 12 0 0 1 23 0A17 17 0 0 1 5 30.500Z" fill="#8a8886" /><circle cx="29" cy="6" r="5" fill="#e00b1c" stroke="#fff" strokeWidth="1.200" /></svg>
          <svg width="20" height="6" viewBox="0 0 20 6" fill="#fff"><circle cx="2" cy="3" r="1.900" /><circle cx="10" cy="3" r="1.900" /><circle cx="18" cy="3" r="1.900" /></svg>
          <Copilot />
        </ToolbarActions>
      </Toolbar>

      <Bookmarks>
        <Bookmark $ls={-0.16}><ImportFolder />Import favorites</Bookmark>
        <BookmarkRule $h={24} $color="#4b54a0" />
        <Bookmark $ls={-0.4}><Gmail />Gmail</Bookmark>
        <Bookmark $ls={-0.4}><YouTube />YouTube</Bookmark>
        <Bookmark><ManageAws />Manage AWS Reso...</Bookmark>
        <Bookmark><AwsFav />AWS &amp; DEVOPS : | All</Bookmark>
        <Bookmark><SiGodaddy size={24} color="#4fc3d9" />GoDaddy IN</Bookmark>
        <Bookmark><ChatGpt />ChatGPT</Bookmark>
        <Bookmark $ls={0.1}><GoogleFav><FcGoogle size={19} /></GoogleFav>Google</Bookmark>
        <Spacer />
        <BookmarkRule $h={24} $color="#4b54a0" />
        <Bookmark $ls={-0.13}><Folder />Other favorites</Bookmark>
      </Bookmarks>

      <ConsoleHeader>
        <HeaderRow>
          <AwsLogo>
            aws
            <svg width="47" height="12" viewBox="0 0 47 12" fill="none" stroke="#f7981f" strokeWidth="2.600"><path d="M1 1.500C13 10.500 29 12 41 5" /><path d="M37.500 2c4-1.200 7-1 7.500 0s-.300 4.500-2.500 7" strokeWidth="2" /></svg>
          </AwsLogo>
          <Spacer $w={25} />
          <VRule $h={33} $color="#414d5c" />
          <Spacer $w={24} />
          <svg width="24" height="24" viewBox="0 0 24 24" fill="#fff">
            {[0, 9, 18].map((y) => [0, 9, 18].map((x) => <rect key={`${x}-${y}`} x={x} y={y} width="6" height="6" rx="1" />))}
          </svg>
          <Label $size={17} $weight={500} $ml={12}>Services</Label>
          <ConsoleSearch><Magnifier w={22} color="#e4e7e8" /><em>Search</em><Label $ls={0.600}>[Alt+S]</Label></ConsoleSearch>
          <HeaderTools>
            <CloudShellIcon />
            <VRule $h={34} $color="#4a5665" />
            <Svg w={24} color="#fff" sw={2.400}><path d="M8.500 18.500v1.500a3.500 3 0 0 0 7 0V18.500M2.500 17.500h19L17.500 12V8a5.500 5.500 0 0 0-11 0v4Z" strokeLinejoin="round" /><path d="M12 0v3" /></Svg>
            <VRule $h={34} $color="#4a5665" />
            <Svg w={24} color="#fff" sw={2.400}><circle cx="12" cy="12" r="10.500" /><path d="M8.500 9.500a3.500 3.200 0 1 1 5.500 2.500c-1.500 1-2 1.300-2 2.500M12 16v2.500" /></Svg>
            <VRule $h={34} $color="#4a5665" />
            <Gear color="#fff" />
            <VRule $h={34} $color="#4a5665" />
            <MenuLabel $ls={0.350}>Stockholm<Caret w={12} h={11} color="#fff" /></MenuLabel>
            <VRule $h={34} $color="#4a5665" />
            <MenuLabel>Sivaranjan<Caret w={12} h={11} color="#fff" /></MenuLabel>
          </HeaderTools>
        </HeaderRow>
        <ServicesRow>
          {services.map((s) => (
            <Service key={s.name} $ls={s.ls}><ServiceTile $from={s.from} $to={s.to}>{s.icon}</ServiceTile>{s.name}</Service>
          ))}
        </ServicesRow>
      </ConsoleHeader>

      <Body>
        <Sidebar>
          <NavItem>EC2 Dashboard<Cross w={20} sw={1.400} color="#414d5c" /></NavItem>
          <NavItem><Label $ls={0.280}>EC2 Global View</Label></NavItem>
          <NavItem>Events</NavItem>
          <NavGroup $h={62.7} $pt={16}><Caret h={12} />Instances</NavGroup>
          <NavItem $active>Instances</NavItem>
          <NavItem>Instance Types</NavItem>
          <NavItem>Launch Templates</NavItem>
          <NavItem>Spot Requests</NavItem>
          <NavItem>Savings Plans</NavItem>
          <NavItem><Label $ls={-0.150}>Reserved Instances</Label></NavItem>
          <NavItem>Dedicated Hosts</NavItem>
          <NavItem><Label $ls={0.050}>Capacity Reservations</Label></NavItem>
          <NewBadge>New</NewBadge>
          <NavGroup $h={72} $pt={27}><Caret h={12} />Images</NavGroup>
          <NavItem>AMIs</NavItem>
        </Sidebar>
        <Gutter $w={22} $pt={5}><ScrollArrow /><ThumbV $h={296} $mt={8} /><ScrollArrow dir="down" /></Gutter>

        <Center>
          <Upper>
            <TablePanel>
              <PanelHeader>
                <HeaderLine>
                  <Heading $ls={-0.550}>Instances <Label $size={26} $ls={1.100} $color="#687078" $ml={2}>(1/3)</Label></Heading>
                  <InfoLink>Info</InfoLink>
                  <Spacer />
                  <Button $w={73}><Refresh /></Button>
                  <Button $w={145}>Connect</Button>
                  <Button $w={232} $ls={0.25} $pl={1}>Instance state<Caret h={12} /></Button>
                  <Button $w={166} $pl={1}>Actions<Caret h={12} /></Button>
                  <SplitButton>
                    <Button $primary $w={228} $pl={7}>Launch instances</Button>
                    <Button $primary $w={44}><Caret h={12} color="#16191f" /></Button>
                  </SplitButton>
                </HeaderLine>
                <FilterLine>
                  <FilterInput><Magnifier w={23} /><em>Find Instance by attribute or tag (case-sensitive)</em></FilterInput>
                  <Select>Running<Caret h={12} /></Select>
                  <Pager>
                    <Svg w={14} h={22} box="0 0 14 22" color="#aab7b8"><path d="M12.500 1 2 11 12.500 21" /></Svg>
                    <Label $size={19} $weight={700} $ml={29}>1</Label>
                    <Spacer $w={30} />
                    <Svg w={14} h={22} box="0 0 14 22" color="#aab7b8"><path d="M1.500 1 12 11 1.500 21" /></Svg>
                    <Spacer $w={18} />
                    <VRule $h={40} $color="#eaeded" />
                    <Spacer $w={20} />
                    <Gear />
                  </Pager>
                </FilterLine>
              </PanelHeader>

              <TableHead>
                <HeadCell $first><CheckSquare $on><Svg w={14} box="0 0 14 14" color="#fff"><path d="M0 7h14" /></Svg></CheckSquare><VRule $h={30} $color="#e9ebed" /></HeadCell>
                <HeadCell $name><HeadText $up={-4}>Name</HeadText><Spacer $w={6} />
                  <Svg w={23} color="#545b64" sw={2}><path d="M11 22H23" strokeWidth="3" /><path d="M3 20.500l2-5L17 3l4 3L8.500 18.500Z" fill="#545b64" stroke="none" /><path d="M1 23l1.500-4 2.500 2Z" fill="#545b64" /><path d="M19 .8l3.500 2.700" strokeWidth="3" /></Svg>
                  <SortMark><SortTriangle /></SortMark><VRule $h={30} $color="#545b64" />
                </HeadCell>
                <HeadCell $ls={-0.350}><HeadText>Instance ID</HeadText><VRule $h={30} $color="#545b64" /></HeadCell>
                <HeadCell $ls={-0.250}><HeadText>Instance state</HeadText><SortMark><SortTriangle /></SortMark><VRule $h={30} $color="#545b64" /></HeadCell>
                <HeadCell $ls={-0.150}><HeadText>Instance type</HeadText><SortMark><SortTriangle /></SortMark><VRule $h={30} $color="#545b64" /></HeadCell>
                <HeadCell><HeadText>Status check</HeadText><VRule $h={30} $color="#545b64" /></HeadCell>
                <HeadCell><HeadText>Alarm status</HeadText><VRule $h={30} $color="#545b64" /></HeadCell>
              </TableHead>

              {rows.map((r) => (
                <TableRow key={r.id} $selected={r.selected}>
                  <Cell $first><CheckSquare $on={r.selected}>{r.selected && <Svg w={15} box="0 0 15 15" color="#fff" sw={2.600}><path d="M1.500 8 5.500 12.500 13 1.500" /></Svg>}</CheckSquare></Cell>
                  <Cell $name $ls={0.700}>{r.name}</Cell>
                  <Cell $ls={0.560} $color="#0a5fae">{r.id}</Cell>
                  <Cell $color="#037f0c"><StatusOk /><Label $ls={-0.150}>Running</Label><ZoomPair><Magnifier sign="+" /><Magnifier sign="-" /></ZoomPair></Cell>
                  <Cell $ls={0.200}>t3.micro</Cell>
                  {r.ok
                    ? <Cell $color="#037f0c"><StatusOk />2/2 checks passed</Cell>
                    : <Cell $color="#687078"><StatusPending />Initializing</Cell>}
                  <Cell $color="#0a5fae" $gap={7} $ls={0.080}>View alarms<PlusIcon /></Cell>
                </TableRow>
              ))}
              <HScroll><ScrollArrow dir="left" /><ThumbH /><ScrollArrow dir="right" /></HScroll>
            </TablePanel>
            <Rail>
              <Svg w={24} h={26} box="0 0 24 26" color="#545b64" sw={2.200}><path d="M12 1.500 22 7V19L12 24.500 2 19V7Z" strokeLinejoin="round" /><circle cx="12" cy="13" r="2.500" fill="#545b64" /><path d="M13 14l6 3.500" strokeWidth="3" /></Svg>
            </Rail>
          </Upper>

          <SplitPanel>
            <SplitMain>
              <DragHandle />
              <SplitHeader>
                <Heading $size={26} $ls={0.100} $mb={0}>Instance: i-071daaffff2c90934 (alb-1)</Heading>
                <Spacer />
                <Gear />
                <Spacer $w={13} />
                <VRule $h={34} $color="#eaeded" />
                <Spacer $w={14} />
                <Cross w={21} sw={1.400} color="#414d5c" />
              </SplitHeader>
              <SplitBody>
                <MetricsToolbar>
                  <ToggleLine>
                    <Toggle />
                    <Label $ml={12} $ls={-0.050}>Alarm recommendations</Label>
                    <Spacer $w={7} />
                    <Svg w={18} h={24} box="0 0 18 24" color="#7d47cf" sw={3}><path d="M.800 6C2 12 5 13 7.500 16.500M17.200 6C16 12 13 13 10.500 16.500M5.500 17h7" /><path d="M5.500 21.800h7" strokeWidth="2.400" /></Svg>
                  </ToggleLine>
                  <RangeBox>
                    <RangePart><Label>3h</Label><Label $ml={31}>1d</Label><Label $ml={31}>1w</Label><Label $color="#0a6ab8" $weight={700} $ml={32}>1h</Label>
                      <Svg w={22} box="0 0 22 22" color="#0a6ab8"><rect x="1.500" y="1.500" width="19" height="19" strokeWidth="3" /><path d="M5.500 7.200h12M5.500 11.200h12M5.500 15.200h8" strokeDasharray="2.600 1.700" strokeWidth="2.600" /></Svg>
                    </RangePart>
                    <ZonePart>UTC timezone<Caret h={12} /></ZonePart>
                  </RangeBox>
                  <ButtonPair><Button $w={73} $h={48}><Refresh /></Button><Button $w={74} $h={48} $pr={1}><Caret h={12} /></Button></ButtonPair>
                  <Spacer $w={15} />
                  <Button $w={271} $h={42} $mt={3} $gap={13} $pr={6} $ls={0.420}>
                    <Svg w={22} color="#545b64" sw={2.600}><path d="M9 2.500H2V22H21.500V15M13 2.500h8.700V11M21 3 8 16" /></Svg>
                    Add to dashboard
                  </Button>
                  <ToolbarMenu><Dots /></ToolbarMenu>
                </MetricsToolbar>
                <Charts>
                  {charts.map((c) => (
                    <ChartCard key={c.title}>
                      <ChartHead>
                        <ChartTitle $ls={c.ls}>{c.title}</ChartTitle>
                        <InfoIcon color={c.active ? "#0b0d10" : "#545b64"} />
                        <Spacer $w={23} />
                        <Dots />
                      </ChartHead>
                      <ChartUnit>{c.unit}</ChartUnit>
                      <ChartBody>
                        <Ticks>{c.ticks.map((t) => <span key={t}>{t}</span>)}</Ticks>
                        <svg width="236" height="100" viewBox="0 0 236 100" fill="none">
                          <path d="M0 16.500H229M0 67.500H229" stroke="#eaeaea" />
                          <path d={c.line} stroke="#1166a8" strokeWidth="2" />
                        </svg>
                      </ChartBody>
                    </ChartCard>
                  ))}
                </Charts>
              </SplitBody>
            </SplitMain>
            <Gutter $w={22} $pt={5} $pl={1}><ScrollArrow /><ThumbV $h={82} $mt={44} /><ScrollArrow dir="down" /></Gutter>
          </SplitPanel>
        </Center>
        <Gutter $w={23} $pt={5} $pl={2}><ScrollArrow /><ThumbV $h={497} $mt={8} /><ScrollArrow dir="down" /></Gutter>
      </Body>
      <Tooltip>Metric Information</Tooltip>

      <Footer>
        <CloudShellIcon />
        <Label $size={17.6} $weight={500} $ml={7} $ls={-0.100}>CloudShell</Label>
        <Label $size={17.6} $weight={500} $ml={37} $ls={-0.300}>Feedback</Label>
        <Spacer />
        <Label $size={17.6} $weight={500} $ls={-0.260}>© 2024, Amazon Web Services, Inc. or its affiliates.</Label>
        <Label $size={17.6} $weight={500} $ml={45} $ls={-0.150}>Privacy</Label>
        <Label $size={17.6} $weight={500} $ml={36} $ls={-0.300}>Terms</Label>
        <Label $size={17.6} $weight={500} $ml={36} $ls={-0.460}>Cookie preferences</Label>
      </Footer>

      <Taskbar>
        <Weather>
          <svg width="31" height="30" viewBox="0 0 31 30"><path d="M18 2a13 13 0 0 1-14 20 12.500 12.500 0 0 0 24-7A13 13 0 0 0 18 2Z" fill="#f5a623" /><g fill="#bcd3fa"><circle cx="9" cy="5" r="4.500" /><circle cx="4" cy="8" r="3.500" /><circle cx="14" cy="8" r="3.500" /><rect x="4" y="6" width="10" height="5.500" /></g><g fill="#a9c6f8"><circle cx="22" cy="21" r="5" /><circle cx="16" cy="24" r="3.500" /><circle cx="27" cy="24" r="3.500" /><rect x="16" y="22" width="11" height="5.500" /></g></svg>
          <div>28°C<br /><small>Partly cloudy</small></div>
        </Weather>
        <TaskButton><TaskIcon><svg width="30" height="30" viewBox="0 0 30 30"><defs><linearGradient id="win" x1="0" y1="0" x2="1" y2="1"><stop stopColor="#8be0ff" /><stop offset="1" stopColor="#1097f5" /></linearGradient></defs><path d="M0 0h14.400v14.400H0ZM15.600 0H30v14.400H15.600ZM0 15.600h14.400V30H0ZM15.600 15.600H30V30H15.600Z" fill="url(#win)" /></svg></TaskIcon><Pill /></TaskButton>
        <TaskButton><TaskIcon><svg width="30" height="28" viewBox="0 0 30 28"><rect y="8" width="22" height="20" rx="1" fill="#6b6a69" /><rect x="8" width="22" height="20" rx="1" fill="#f0efef" /><path d="M8 8H22V20H8Z" fill="#b3b2b2" /></svg></TaskIcon><Pill /></TaskButton>
        <TaskButton><TaskIcon><svg width="30" height="30" viewBox="0 0 30 30"><circle cx="15" cy="15" r="15" fill="#fbc116" /><path d="M15 15 2 7.500A15 15 0 0 0 15 30L21.500 18.500Z" fill="#2da24f" /><path d="M15 8H28.300A15 15 0 0 0 2 7.500L9 19 12 12Z" fill="#e33b2e" /><circle cx="15" cy="15" r="7.200" fill="#fff" /><circle cx="15" cy="15" r="5.600" fill="#2f7bed" /></svg></TaskIcon><Pill $w={8} /></TaskButton>
        <TaskButton><TaskIcon><svg width="31" height="27" viewBox="0 0 31 27"><path d="M0 2a1.500 1.500 0 0 1 1.500-1.500H10L13 4H0Z" fill="#d9960f" /><path d="M0 7h10l3-3.500H29.500A1.500 1.500 0 0 1 31 5V25.500A1.500 1.500 0 0 1 29.500 27H1.500A1.500 1.500 0 0 1 0 25.500Z" fill="#ffc933" /><path d="M5 27V22a3 3 0 0 1 3-3H22a3 3 0 0 1 3 3v5Z" fill="#1878c9" /><path d="M10 23.500h10" stroke="#0c4f91" strokeWidth="1.600" strokeLinecap="round" /></svg></TaskIcon><Pill /></TaskButton>
        <TaskButton><TaskIcon><svg width="30" height="26" viewBox="0 0 30 26"><path d="M0 13.500 5.500 8 17.500 20 12 25.500Z" fill="#1b5cc0" /><path d="M12 25.500 6.800 20 25 1.500 30 7Z" fill="#3f9bea" /></svg></TaskIcon><Pill /></TaskButton>
        <ActiveTaskButton><TaskIcon><svg width="32" height="30" viewBox="0 0 32 30"><defs><linearGradient id="edg" x1="0" y1="0" x2="1" y2=".4"><stop stopColor="#1c8fdc" /><stop offset=".6" stopColor="#2ec4c0" /><stop offset="1" stopColor="#6be04e" /></linearGradient></defs><path d="M2 16C2 6 9 0 17 0s14 5.500 14 12c0 5-4 8-8.500 8-3 0-4.500-1-4.500-2.500s2-2 2-5S17 7.500 13 7.500 4 10 2 16Z" fill="url(#edg)" /><path d="M2 15c2-5 6-7.500 10-7.500-3 2-4 5-4 8 0 7 6 10.500 12 10.500 4 0 6-1 9-3-2 4-7 7-12 7C8 30 1 24 2 15Z" fill="#1667b7" /><circle cx="9" cy="23" r="7" fill="#c5c3c2" /><circle cx="9" cy="20.500" r="3" fill="#858382" /><path d="M4 27.500a5.500 5.500 0 0 1 10 0 7 7 0 0 1-10 0Z" fill="#858382" /></svg></TaskIcon><Pill $w={20} $color="#f0735f" /></ActiveTaskButton>
        <TaskButton><TaskIcon><svg width="28" height="27" viewBox="0 0 28 27"><rect x="12" y="3" width="15.500" height="21" rx="1" fill="#fff" stroke="#2b579a" /><path d="M17 7h8M17 10.500h8M17 14h8M17 17.500h8M17 21h8" stroke="#2b579a" strokeWidth="1.500" /><path d="M0 3 17 0V27L0 24Z" fill="#2b579a" /><text x="8" y="18.500" textAnchor="middle" fontSize="13" fontWeight="700" fontFamily={OS_FONT} fill="#fff">W</text></svg></TaskIcon><Pill $w={8} /></TaskButton>
        <TaskButton><TaskIcon><svg width="23" height="30" viewBox="0 0 23 30"><rect y="24" width="23" height="6" rx="1.500" fill="#a85a1d" /><rect y="2" width="23" height="26" rx="1.500" fill="#5fc8e3" /><rect y="26" width="23" height="1.500" fill="#fff" /><path d="M4 9.500h15M4 14h15M4 18.500h15" stroke="#11748f" strokeWidth="2" /><path d="M3 0v5M7.500 0v5M12 0v5M16.500 0v5M20.500 0v5" stroke="#1587a3" strokeWidth="2" /></svg></TaskIcon><Pill $w={8} /></TaskButton>
        <TaskButton><TaskIcon><FaWhatsapp size={33} color="#25d366" /></TaskIcon><Pill $w={8} /></TaskButton>
        <TaskButton><TaskIcon><svg width="30" height="30" viewBox="0 0 30 30"><rect width="30" height="30" rx="1.500" fill="#5b21b6" /><path d="M7 8v14l9-7Z" fill="#fff" /><path d="M23 8v14l-9-7Z" fill="#fff" fillOpacity=".6" /></svg></TaskIcon><Pill $w={27} $color="#f7e300" /></TaskButton>
        <Tray>
          <Svg w={14} h={9} box="0 0 14 9" color="#fff" sw={1.800}><path d="M.8 8 7 1.500 13.200 8" /></Svg>
          <Spacer $w={23} />
          <Svg w={20} h={16} box="0 0 20 16" color="#fff" sw={1.500}><rect x=".8" y=".8" width="18.400" height="14.400" rx="2" /><path d="M3.500 5h13M3.500 8h13" strokeDasharray="2 1.600" /><path d="M5 11.500h10" /></Svg>
          <Spacer $w={20} />
          <Svg w={19} h={16} box="0 0 19 16" color="#fff" sw={1.500}><rect x=".8" y=".8" width="17.400" height="14.400" rx="2" /><path d="M1 9.500h17M9.500 9.500v5.500" /></Svg>
          <TrayText $w={30} $ml={24} $mr={22} $align="center">ENG<br />IN</TrayText>
          <Svg w={20} h={17} box="0 0 20 17" color="#fff" sw={1.500}><path d="M1 6.500C6-.500 14-.500 19 6.500M3.500 9.500c4-5 9-5 13 0M6.500 12.500c2.500-3 4.500-3 7 0" /><circle cx="10" cy="14.800" r="1.500" fill="#fff" stroke="none" /></Svg>
          <Spacer $w={10} />
          <Svg w={20} h={15} box="0 0 20 15" color="#fff" sw={1.300}><path d="M1 5H4L9 1V14L4 10.500H1ZM12.500 4.500l6 6M18.500 4.500l-6 6" strokeLinejoin="round" /></Svg>
          <Spacer $w={10} />
          <Svg w={21} h={14} box="0 0 21 14" color="#fff" sw={1.500}><rect x=".8" y=".8" width="17" height="12.400" rx="3" /><rect x="3" y="3" width="9" height="8" rx="1" fill="#fff" stroke="none" /><path d="M19.800 4.500v5" strokeWidth="2" /></Svg>
          <TrayText $w={80} $ml={17} $mr={10} $align="right">10:30 PM<br />15-03-2024</TrayText>
          <svg width="18" height="22" viewBox="0 0 18 22"><path d="M1 18c2-2 1.500-5 1.500-8C2.500 5 5 3 8.500 3S14.500 5 14.500 10c0 3 0 6 2 8Z" fill="#fff" /><path d="M6 20h5" stroke="#fff" strokeWidth="2.500" /><path d="M5.500 8.500h4l-4 5h4" fill="none" stroke="#2a2827" strokeWidth="1.400" /><path d="M11 1.500h5l-5 6h5" fill="none" stroke="#2a2827" strokeWidth="3" /><path d="M11.500 1.500h4.500l-4.500 5.500h4.500" fill="none" stroke="#fff" strokeWidth="1.400" /></svg>
          <Spacer $w={20} />
          <CopilotPre />
        </Tray>
      </Taskbar>
    </Screen>
  );
}
